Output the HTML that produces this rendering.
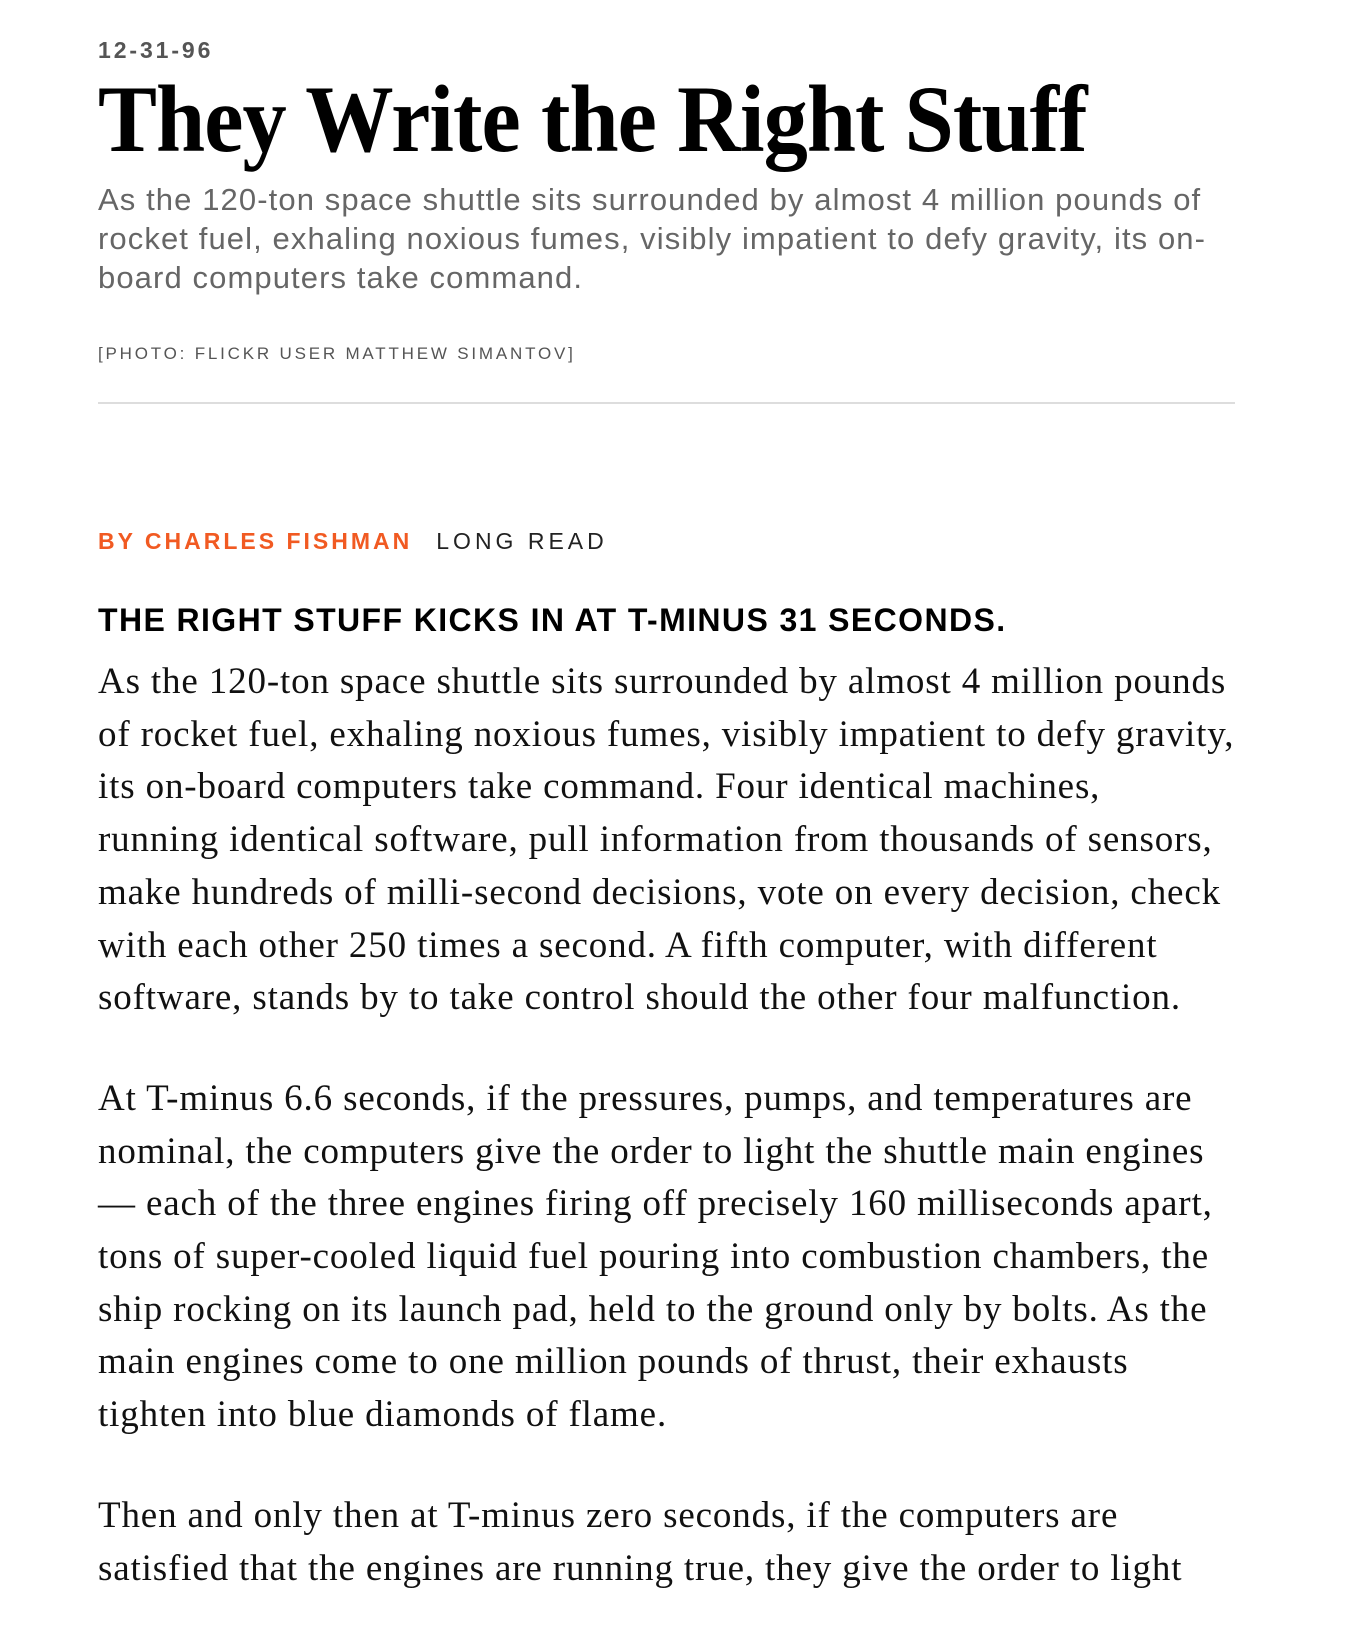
<!DOCTYPE html>
<html><head><meta charset="utf-8"><style>
body{margin:0;background:#fff;width:1360px;height:1600px;overflow:hidden}
.w{position:absolute;left:98px;width:1140px}
.date{top:37px;font:bold 23px "Liberation Sans",sans-serif;color:#555;letter-spacing:2.9px}
.title{top:59px;font:bold 95px/120px "Liberation Serif",serif;color:#000;white-space:nowrap;transform:scaleX(0.93);transform-origin:left;letter-spacing:-1px}
.sub{top:180px;font:31px/39px "Liberation Sans",sans-serif;color:#666;white-space:nowrap;letter-spacing:1.1px}
.cred{top:344px;font:17px "Liberation Sans",sans-serif;color:#555;letter-spacing:2.8px}
.hr{top:402px;height:2px;background:#ddd;width:1137px}
.by{top:528px;font:bold 23px "Liberation Sans",sans-serif;color:#f15a22;letter-spacing:3px;white-space:nowrap}
.by span{color:#222;font-weight:normal;letter-spacing:4px;margin-left:24px}
.h{top:602px;font:bold 32px "Liberation Sans",sans-serif;color:#000;white-space:nowrap;letter-spacing:1.4px}
.body{top:656px;font:37px/52.7px "Liberation Serif",serif;color:#111;white-space:nowrap;letter-spacing:0.85px}
.body p{margin:0 0 48px}
</style></head><body>
<div class="w date">12-31-96</div>
<div class="w title">They Write the Right Stuff</div>
<div class="w sub">As the 120-ton space shuttle sits surrounded by almost 4 million pounds of<br>rocket fuel, exhaling noxious fumes, visibly impatient to defy gravity, its on-<br>board computers take command.</div>
<div class="w cred">[PHOTO: FLICKR USER MATTHEW SIMANTOV]</div>
<div class="w hr"></div>
<div class="w by">BY CHARLES FISHMAN<span>LONG READ</span></div>
<div class="w h">THE RIGHT STUFF KICKS IN AT T-MINUS 31 SECONDS.</div>
<div class="w body">
<p>As the 120-ton space shuttle sits surrounded by almost 4 million pounds<br>of rocket fuel, exhaling noxious fumes, visibly impatient to defy gravity,<br>its on-board computers take command. Four identical machines,<br>running identical software, pull information from thousands of sensors,<br>make hundreds of milli-second decisions, vote on every decision, check<br>with each other 250 times a second. A fifth computer, with different<br>software, stands by to take control should the other four malfunction.</p>
<p>At T-minus 6.6 seconds, if the pressures, pumps, and temperatures are<br>nominal, the computers give the order to light the shuttle main engines<br>— each of the three engines firing off precisely 160 milliseconds apart,<br>tons of super-cooled liquid fuel pouring into combustion chambers, the<br>ship rocking on its launch pad, held to the ground only by bolts. As the<br>main engines come to one million pounds of thrust, their exhausts<br>tighten into blue diamonds of flame.</p>
<p>Then and only then at T-minus zero seconds, if the computers are<br>satisfied that the engines are running true, they give the order to light</p>
</div>
</body></html>
